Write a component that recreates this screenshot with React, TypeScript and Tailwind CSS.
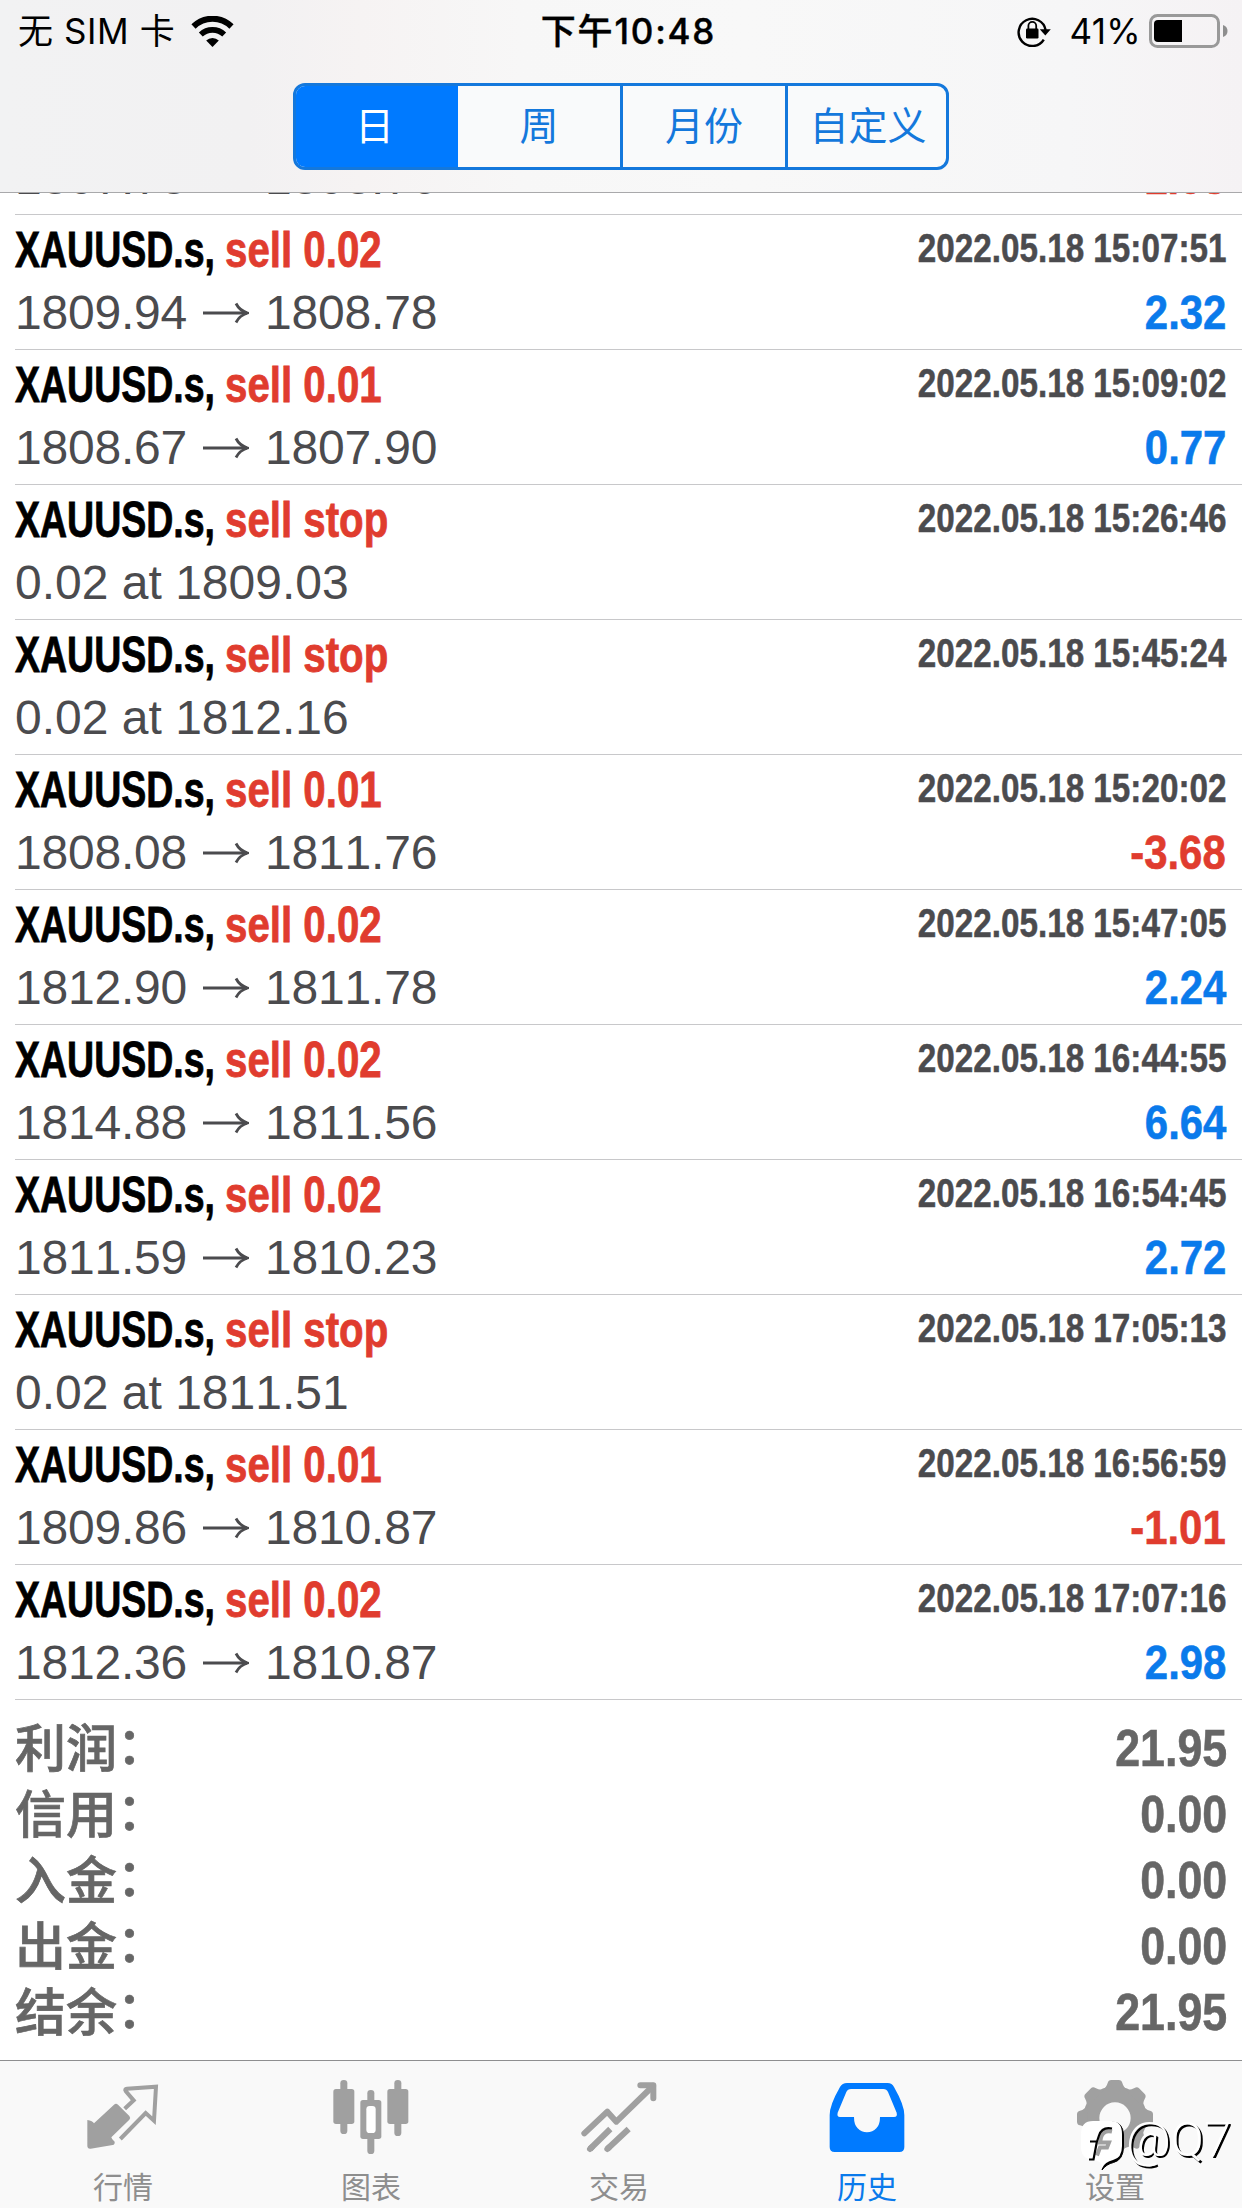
import { ReactNode } from 'react';
import clsx from 'clsx';

interface Deal {
  action: string;
  detail?: string;
  from?: string;
  to?: string;
  time: string;
  profit?: string;
}

const deals: Deal[] = [
  { action: 'sell 0.01', from: '1807.73', to: '1808.76', time: '2022.05.18 14:58:21', profit: '-1.03' },
  { action: 'sell 0.02', from: '1809.94', to: '1808.78', time: '2022.05.18 15:07:51', profit: '2.32' },
  { action: 'sell 0.01', from: '1808.67', to: '1807.90', time: '2022.05.18 15:09:02', profit: '0.77' },
  { action: 'sell stop', detail: '0.02 at 1809.03', time: '2022.05.18 15:26:46' },
  { action: 'sell stop', detail: '0.02 at 1812.16', time: '2022.05.18 15:45:24' },
  { action: 'sell 0.01', from: '1808.08', to: '1811.76', time: '2022.05.18 15:20:02', profit: '-3.68' },
  { action: 'sell 0.02', from: '1812.90', to: '1811.78', time: '2022.05.18 15:47:05', profit: '2.24' },
  { action: 'sell 0.02', from: '1814.88', to: '1811.56', time: '2022.05.18 16:44:55', profit: '6.64' },
  { action: 'sell 0.02', from: '1811.59', to: '1810.23', time: '2022.05.18 16:54:45', profit: '2.72' },
  { action: 'sell stop', detail: '0.02 at 1811.51', time: '2022.05.18 17:05:13' },
  { action: 'sell 0.01', from: '1809.86', to: '1810.87', time: '2022.05.18 16:56:59', profit: '-1.01' },
  { action: 'sell 0.02', from: '1812.36', to: '1810.87', time: '2022.05.18 17:07:16', profit: '2.98' },
];

const summary = [
  { label: '利润', value: '21.95' },
  { label: '信用', value: '0.00' },
  { label: '入金', value: '0.00' },
  { label: '出金', value: '0.00' },
  { label: '结余', value: '21.95' },
];

const periods = [
  { name: '日', style: 'w-[162px] bg-[#007aff] pr-[5px] text-white' },
  { name: '周', style: 'w-[165px] border-r-[3px]' },
  { name: '月份', style: 'w-[165px] border-r-[3px]' },
  { name: '自定义', style: 'w-[158px] pl-[2px]' },
];

function WifiIcon() {
  return (
    <svg className="ml-[16px] h-[31px] w-[43px]" viewBox="0 0 43 31">
      <path d="M2.5 10.5a27 27 0 0 1 38 0" fill="none" stroke="#000" strokeWidth="6" />
      <path d="M9.8 18.5a17 17 0 0 1 23.4 0" fill="none" stroke="#000" strokeWidth="5.6" />
      <path d="M21.5 31l-6.3-6.4a9 9 0 0 1 12.6 0z" fill="#000" />
    </svg>
  );
}

function RotationLockIcon() {
  return (
    <svg className="h-[32px] w-[36px]" viewBox="0 0 36 32">
      <path d="M26.8 24.6A13.6 13.6 0 1 1 28.6 15" fill="none" stroke="#000" strokeWidth="2.4" />
      <path d="M22.8 14.2h11l-5.5 6.2z" />
      <rect x="9" y="13.5" width="12.5" height="10" rx="1.2" />
      <path d="M11.4 14v-3.2a3.9 3.9 0 0 1 7.8 0V14" fill="none" stroke="#000" strokeWidth="1.8" />
    </svg>
  );
}

function BatteryIcon() {
  return (
    <svg className="ml-[8px] h-[34px] w-[79px]" viewBox="0 0 79 34">
      <rect x="1.5" y="1.5" width="68" height="31" rx="7" fill="none" stroke="#999" strokeWidth="3" />
      <path d="M9 6h24v22H9a4 4 0 0 1-4-4V10a4 4 0 0 1 4-4z" />
      <path d="M74 11q4.500 1.500 4.500 6t-4.500 6z" fill="#8e8e8e" />
    </svg>
  );
}

function ArrowIcon() {
  return (
    <svg className="ml-[16px] mr-[16px] h-[22px] w-[46px]" viewBox="0 0 46 22" fill="none" stroke="#4b4b4e" strokeWidth="2.8">
      <path d="M0 11h44" />
      <path d="M33 1.500q3.500 7 11.500 9.500q-8 2.500-11.500 9.500" />
    </svg>
  );
}

function QuotesIcon() {
  return (
    <svg className="size-[76px]" viewBox="0 0 228 228" fill="#a0a0a0">
      <path d="M7 120q16 3 20 10L87 74q6-5 12 0l34 34q5 6 0 11L79 172q1 7 10 13q1 9-6 10l-66 11q-10 1-10-9z" />
      <path
        d="M119 80l27-25-24-28q-4-6 4-7l87-6-6 102-25-23-76 78"
        transform="translate(0 6)"
        fill="none"
        stroke="#a0a0a0"
        strokeWidth="12"
      />
    </svg>
  );
}

function ChartIcon() {
  return (
    <svg className="size-[76px]" viewBox="0 0 228 228" fill="#a0a0a0">
      <rect x="22" y="0" width="21" height="162" rx="10" />
      <rect x="1" y="27" width="63" height="105" rx="8" />
      <rect x="184" y="0" width="21" height="168" rx="10" />
      <rect x="163" y="27" width="63" height="105" rx="8" />
      <rect x="103" y="30" width="21" height="192" rx="10" />
      <rect x="82" y="60" width="63" height="117" rx="8" />
      <rect x="100" y="78" width="28" height="81" rx="10" fill="#fff" />
    </svg>
  );
}

function TradeIcon() {
  return (
    <svg className="size-[76px]" viewBox="0 0 228 228" fill="none" stroke="#a0a0a0" strokeWidth="18" strokeLinecap="round" strokeLinejoin="round">
      <path d="M10 160l69-65 27 30L216 18" />
      <path d="M178 16h39v39" />
      <path d="M27 207l61-60M79 207l64-60" strokeLinecap="butt" />
      <path d="M27 207l5-5M79 207l5-5" />
    </svg>
  );
}

function HistoryIcon() {
  return (
    <svg className="size-[76px]" viewBox="0 0 228 228" fill="#007aff">
      <path
        fillRule="evenodd"
        d="M54 9h122q13 0 19 12q31 54 31 84v96q0 15-15 15H17q-15 0-15-15v-96q0-30 31-84q7-12 21-12zM66 27q-10 0-14 9L26 98q-3 13 7 13h42q0 23 11 34q11 12 28 12t28-12q11-11 11-34h42q11 0 8-13l-26-62q-4-9-14-9z"
      />
    </svg>
  );
}

const gearTeeth = [0, 45, 90, 135, 180, 225, 270, 315];

function SettingsIcon() {
  return (
    <svg className="size-[76px]" viewBox="0 0 228 228" fill="#a0a0a0">
      <circle cx="114" cy="114" r="71" fill="none" stroke="#a0a0a0" strokeWidth="48" />
      {gearTeeth.map((angle) => (
        <path
          key={angle}
          d="M74 32Q88 24 92 9Q94 0 103 0h22Q134 0 136 9Q140 24 154 32z"
          transform={`rotate(${angle} 114 114)`}
        />
      ))}
    </svg>
  );
}

const tabs: { label: string; icon: ReactNode; active?: boolean }[] = [
  { label: '行情', icon: <QuotesIcon /> },
  { label: '图表', icon: <ChartIcon /> },
  { label: '交易', icon: <TradeIcon /> },
  { label: '历史', icon: <HistoryIcon />, active: true },
  { label: '设置', icon: <SettingsIcon /> },
];

function StatusBar() {
  return (
    <div className="grid h-[62px] grid-cols-3 items-center pl-[18px] pr-[14px] font-[Inter,'Noto_Sans_CJK_SC',sans-serif] text-[35px] leading-none text-black">
      <div className="flex items-center whitespace-pre">
        <span className="tracking-[0.6px]">无 SIM 卡</span>
        <WifiIcon />
      </div>
      <div className="pl-[11px] text-center font-medium tracking-[1.8px] [-webkit-text-stroke:0.4px]">下午10:48</div>
      <div className="flex items-center justify-end">
        <RotationLockIcon />
        <span className="ml-[17px] tracking-[0.3px]">41%</span>
        <BatteryIcon />
      </div>
    </div>
  );
}

function Header() {
  return (
    <header className="h-[193px] border-b border-[#a9a9ab] bg-[linear-gradient(90deg,#f2f2f3_0%,#f2f1f2_20%,#f6f3f3_29%,#f7f7f7_42%,#f8f8f8_60%,#f6f6f7_86%,#f5f2f4_100%)]">
      <StatusBar />
      <div className="mx-auto mt-[21px] flex h-[87px] w-[656px] overflow-hidden rounded-[12px] border-[3px] border-[#1478dc] bg-[#f9fafb] text-[#1478dc]">
        {periods.map((period) => (
          <div
            key={period.name}
            className={clsx('flex items-center justify-center border-[#1478dc] text-[39px] leading-none', period.style)}
          >
            {period.name}
          </div>
        ))}
      </div>
    </header>
  );
}

function DealRow({ deal }: { deal: Deal }) {
  const loss = deal.profit?.startsWith('-');
  return (
    <div className="ml-[15px] h-[135px] border-b border-[#c8c8ca] pr-[16px] pt-[3px]">
      <div className="flex h-[62px] justify-between font-bold leading-[64px] [-webkit-text-stroke:0.8px]">
        <div className="flex text-[50px]">
          <span className="w-[210px] origin-left scale-x-[0.75] whitespace-nowrap text-black">XAUUSD.s,</span>
          <span className="origin-left scale-x-[0.805] whitespace-nowrap text-[#e03c2e]">{deal.action}</span>
        </div>
        <span className="origin-right scale-x-[0.831] text-[40px] leading-[61px] text-[#4b4b4e] [-webkit-text-stroke:0.5px]">
          {deal.time}
        </span>
      </div>
      <div className="flex h-[62px] justify-between leading-[64px] text-[#4b4b4e]">
        <div className="flex items-center pt-[4px] text-[48px] [font-kerning:none]">
          {deal.detail && <span>{deal.detail}</span>}
          {deal.to && (
            <>
              <span className="tracking-[-0.2px]">{deal.from}</span>
              <ArrowIcon />
              <span className="tracking-[-0.2px]">{deal.to}</span>
            </>
          )}
        </div>
        {deal.profit && (
          <span
            className={clsx(
              'origin-right scale-x-[0.855] text-[49px] font-bold [-webkit-text-stroke:0.6px]',
              loss ? 'text-[#e03c2e]' : 'text-[#0a7aeb]'
            )}
          >
            {deal.profit}
          </span>
        )}
      </div>
    </div>
  );
}

function Summary() {
  return (
    <div className="pl-[15px] pr-[15px] pt-[15px] font-bold text-[#666]">
      {summary.map((row) => (
        <div key={row.label} className="flex h-[66px] items-center justify-between leading-[66px]">
          <div className="flex pt-[3px] text-[51px] font-medium [-webkit-text-stroke:0.7px]">
            <span>{row.label}</span>
            <span className="-ml-[13px] -mt-[5px] font-['Noto_Sans_CJK_TC',sans-serif]">：</span>
          </div>
          <span className="origin-right scale-x-[0.86] text-[52px] [-webkit-text-stroke:0.6px]">{row.value}</span>
        </div>
      ))}
    </div>
  );
}

function TabBar() {
  return (
    <nav className="flex h-[148px] shrink-0 border-t border-[#8e8e90] bg-[#f9f9f9]">
      {tabs.map((tab) => (
        <div key={tab.label} className="flex w-[248px] flex-col items-center pr-[2px] pt-[19px]">
          {tab.icon}
          <span className={clsx('mt-[16px] text-[30px] leading-[32px]', tab.active ? 'text-[#0a7aeb]' : 'text-[#8e8e8e]')}>
            {tab.label}
          </span>
        </div>
      ))}
    </nav>
  );
}

function Watermark() {
  return (
    <div className="absolute left-[1080px] top-[2119px] flex">
      <svg className="h-[52px] w-[46px]" viewBox="0 0 46 52">
        <path d="M32 3q11 0 11.500 13v11q0 14-10 16.500-7 1.500-11.500 7.500l3-8z" fill="#000" stroke="#000" strokeWidth="1" />
        <path d="M13 2h18q11 0 11 13v12q0 12-9 14-8 2-11 8 0-6-6-7.500Q1 41 1 28V15Q1 2 13 2z" fill="#fff" />
        <path d="M32 12.500q-9-2-11 6l-1 5h9l-2 5h-7l-3 8" fill="none" stroke="#a0a0a0" strokeWidth="4" />
        <path d="M32 9.500q-10-2-13 7l-2 6h-7M17 22l-3.500 18.500H9" fill="none" stroke="#000" strokeWidth="2.2" />
      </svg>
      <span className="-mt-[3px] font-[Roboto,sans-serif] text-[49px] font-light leading-[48px] text-white [text-shadow:2px_2px_0_#000]">
        @Q7
      </span>
    </div>
  );
}

export default function App() {
  return (
    <div className="relative flex h-[2208px] w-[1242px] flex-col overflow-hidden bg-white font-['Liberation_Sans','Noto_Sans_CJK_SC',sans-serif]">
      <Header />
      <main className="min-h-0 flex-1 overflow-hidden">
        {/* first row is scrolled mostly under the header */}
        <div className="-mt-[113px]">
          {deals.map((deal) => (
            <DealRow key={deal.time} deal={deal} />
          ))}
          <Summary />
        </div>
      </main>
      <TabBar />
      <Watermark />
    </div>
  );
}
